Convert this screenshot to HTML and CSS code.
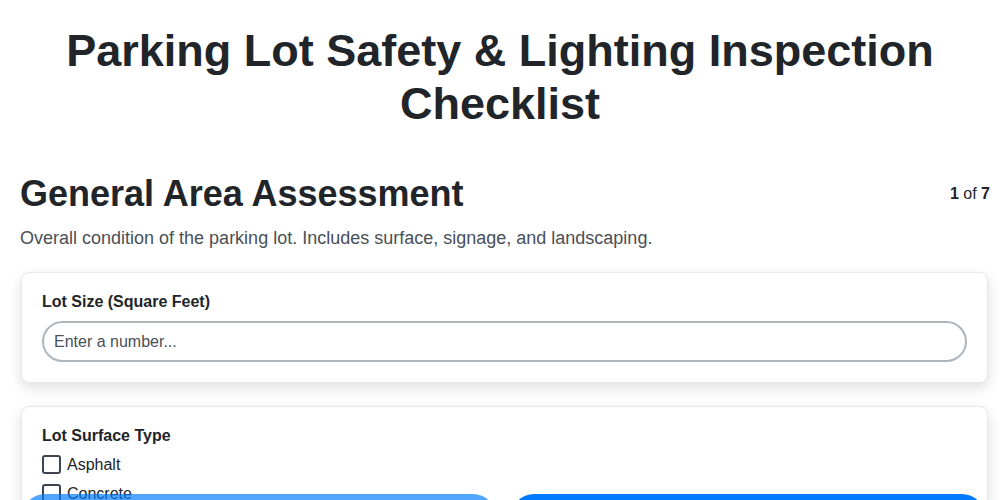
FILE: index.html
```html
<!DOCTYPE html>
<html>
<head>
<meta charset="utf-8">
<link rel="stylesheet" href="styles.css">
</head>
<body>
<div class="page">
  <h1 class="title">Parking Lot Safety &amp; Lighting Inspection Checklist</h1>
  <div class="section-head">
    <h2 class="section-title">General Area Assessment</h2>
    <div class="step"><b>1</b> of <b>7</b></div>
  </div>
  <p class="section-desc">Overall condition of the parking lot. Includes surface, signage, and landscaping.</p>
  <div class="card">
    <label class="field-label">Lot Size (Square Feet)</label>
    <input class="text-input" type="text" placeholder="Enter a number...">
  </div>
  <div class="card">
    <div class="field-label field-label-group">Lot Surface Type</div>
    <label class="check"><span class="box"></span>Asphalt</label>
    <label class="check"><span class="box"></span>Concrete</label>
    <label class="check"><span class="box"></span>Gravel</label>
  </div>
</div>
<div class="footer">
  <button class="btn btn-prev">Previous</button>
  <button class="btn btn-next">Next</button>
</div>
</body>
</html>
```
FILE: styles.css
```css
* { box-sizing: border-box; }
body {
  margin: 0;
  font-family: "Liberation Sans", Arial, sans-serif;
  color: #212529;
  background: #fff;
}
.page {
  padding: 0 10px 0 20px;
}
.title {
  margin: 24px 0 0;
  text-align: center;
  font-size: 45px;
  line-height: 53px;
  font-weight: 700;
  padding: 0 45px 0 35px;
}
.section-head {
  display: flex;
  justify-content: space-between;
  align-items: center;
  margin-top: 42px;
}
.section-title {
  margin: 0;
  font-size: 36px;
  line-height: 44px;
  font-weight: 700;
}
.step {
  font-size: 16px;
  color: #212529;
}
.section-desc {
  margin: 11px 0 23px;
  font-size: 18px;
  line-height: 22px;
  color: #495057;
}
.card {
  margin: 0 2px 23px 1px;
  background: #fff;
  border: 1px solid #e6e6ec;
  border-radius: 8px;
  box-shadow: 0 5px 14px rgba(0,0,0,0.13);
  padding: 20px 20px;
}
.field-label {
  display: block;
  font-size: 16px;
  line-height: 18px;
  font-weight: 700;
  margin-bottom: 10px;
}
.field-label-group { margin-bottom: 5px; }
.text-input {
  display: block;
  width: 100%;
  height: 41px;
  border: 2px solid #adb5bd;
  border-radius: 21px;
  padding: 0 10px;
  font-family: inherit;
  font-size: 16px;
  color: #212529;
  background: #fff;
}
.text-input::placeholder { color: #495057; }
.check {
  display: flex;
  align-items: center;
  font-size: 16px;
  height: 29px;
}
.box {
  width: 19px;
  height: 19px;
  border: 2px solid #3d4451;
  border-radius: 3px;
  margin-right: 6px;
}
.footer {
  position: fixed;
  left: 0;
  right: 0;
  bottom: -40px;
  display: flex;
  gap: 15px;
  padding: 0 15px 0 22px;
}
.btn {
  flex: 1;
  height: 46px;
  border: none;
  border-radius: 23px;
  color: #fff;
  font-family: inherit;
  font-size: 16px;
  font-weight: 700;
}
.btn-prev { background: #007bff; opacity: 0.68; }
.btn-next { background: #007bff; }
```
